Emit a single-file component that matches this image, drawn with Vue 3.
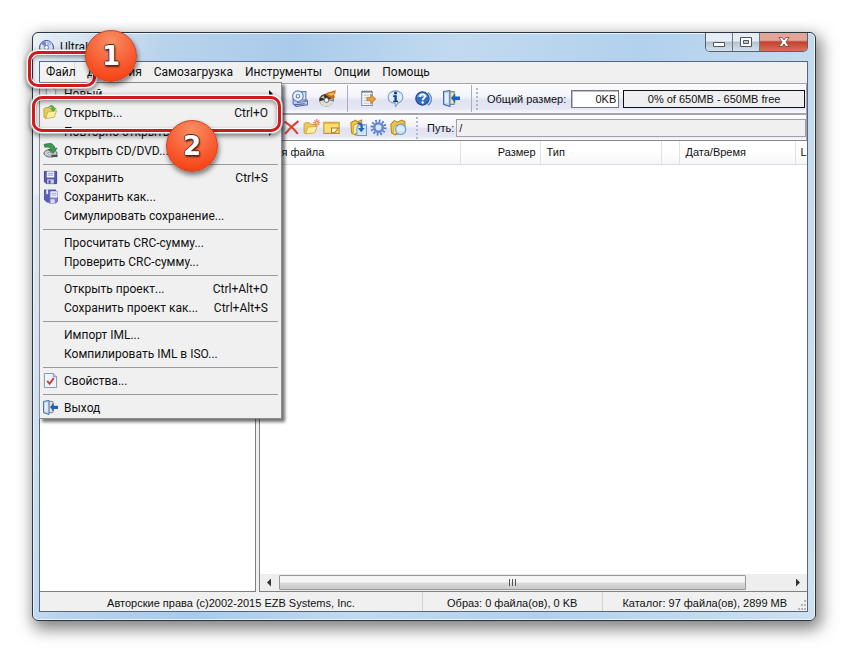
<script setup>
const menus = ['Действия', 'Самозагрузка', 'Инструменты', 'Опции', 'Помощь']
const fileMenu = [
  { t: 'Новый', icon: 'new', sub: true },
  { t: 'Открыть...', k: 'Ctrl+O', icon: 'open' },
  { t: 'Повторно открыть', sub: true },
  { t: 'Открыть CD/DVD...', icon: 'cd' },
  { sep: true },
  { t: 'Сохранить', k: 'Ctrl+S', icon: 'save' },
  { t: 'Сохранить как...', icon: 'saveas' },
  { t: 'Симулировать сохранение...' },
  { sep: true },
  { t: 'Просчитать CRC-сумму...' },
  { t: 'Проверить CRC-сумму...' },
  { sep: true },
  { t: 'Открыть проект...', k: 'Ctrl+Alt+O' },
  { t: 'Сохранить проект как...', k: 'Ctrl+Alt+S' },
  { sep: true },
  { t: 'Импорт IML...' },
  { t: 'Компилировать IML в ISO...' },
  { sep: true },
  { t: 'Свойства...', icon: 'props' },
  { sep: true },
  { t: 'Выход', icon: 'exit' }
]
</script>

<template>
  <svg class="defs" aria-hidden="true">
    <symbol id="i-disc" viewBox="0 0 16 16">
      <circle cx="8" cy="8" r="7.4" fill="#dfe4f4" stroke="#29366e" />
      <path d="M8 8 2 4A7 7 0 0 1 7 1ZM8 8 14 12A7 7 0 0 1 9 15Z" fill="#6c8bd8" />
      <path d="M8 8 9 1A7 7 0 0 1 14 4Z" fill="#a9bdea" />
      <circle cx="8" cy="8" r="2.2" fill="#fff" stroke="#5d6a9a" stroke-width=".8" />
    </symbol>
    <symbol id="i-new" viewBox="0 0 16 16">
      <path d="M3.500 1.500h7l3 3v10h-10z" fill="#f4f7fd" stroke="#8d9bb5" />
    </symbol>
    <symbol id="i-open" viewBox="0 0 16 16">
      <path d="M1 4l1-1 4-.5 1.500 1.500 4.500-.5v3L3 14.500 1 13z" fill="#e9c95a" stroke="#b39534" stroke-width=".8" />
      <path d="M3 14.500 5 7.500l9.500-1.500-2.500 7z" fill="#fbf0a0" stroke="#c0a545" stroke-width=".8" />
      <path d="M6 2.500C8-.5 11.500 0 12 3.500h2L11 7 8.500 4H10C9.500 2.200 8 2 6 2.500z" fill="#5ab43c" stroke="#36852a" stroke-width=".5" />
    </symbol>
    <symbol id="i-cd" viewBox="0 0 16 16">
      <ellipse cx="8" cy="11" rx="7" ry="4" fill="#c9ced4" stroke="#596069" />
      <path d="M9 12.500h6.500v2.500H9z" fill="#45515b" />
      <ellipse cx="7" cy="11" rx="2" ry="1" fill="#fff" stroke="#666" stroke-width=".6" />
      <path d="M1 1.500l5-1C9.500 0 12 2 12.500 5.500H15L11 11 5.500 7H8.500C8 4.800 6 4 2 4.500z" fill="#3c9a4f" stroke="#1e6038" stroke-width=".7" />
    </symbol>
    <symbol id="i-save" viewBox="0 0 16 16">
      <path d="M1.500 1.500h13v13h-11l-2-2z" fill="#5759ad" stroke="#3e4192" />
      <path d="M4 1.500h8V8H4z" fill="#f5f7ff" />
      <path d="M5 3.500h6M5 5.500h6" stroke="#8c94c5" />
      <path d="M4.500 10h7v4.500h-7z" fill="#cfd2e8" /><path d="M6 11h2v3.500H6z" fill="#4547a0" />
    </symbol>
    <symbol id="i-saveas" viewBox="0 0 16 16">
      <path d="M1 .5h13v11H12v3H4l-3-3z" fill="#5b5db2" />
      <path d="M3.500.5h2v5h-2z" fill="#e9ebf8" />
      <path d="M6.500 2.500h9V13l-2 2h-7z" fill="#7f82c8" stroke="#5457a6" stroke-width=".8" />
      <path d="M8 2.500h7.500V9H8z" fill="#f7f8ff" /><path d="M9 4.500h5.500M9 6.500h5.500" stroke="#949bca" />
      <path d="M8 11h4.500v4H8z" fill="#d8dbee" />
    </symbol>
    <symbol id="i-props" viewBox="0 0 16 16">
      <path d="M1.500.5h9.500l3.500 3.500v11.500h-13z" fill="#eef3fc" stroke="#7c91b9" />
      <path d="M11 .5V4h3.500" fill="#c8d6ee" stroke="#7c91b9" />
      <path d="M4.500 8.500l2.500 3 4.500-6" fill="none" stroke="#d33a32" stroke-width="2" />
    </symbol>
    <symbol id="i-exit" viewBox="0 0 16 16">
      <path d="M4.500 1.500h6v12h-6z" fill="#f2e4a6" stroke="#6f87ae" />
      <path d="M.5 1.500 6.500.5v15l-6-2z" fill="#b9d2f2" stroke="#4569a5" />
      <path d="M2 3l3-.5v10L2 12z" fill="#e3effc" />
      <path d="M7.500 7.500 11.500 3v3H16v3.500h-4.500v3z" fill="#1f5fc4" />
    </symbol>
    <symbol id="i-drive" viewBox="0 0 16 16">
      <path d="M2 8.500 12 7l3.500 3v4L5 15.500 2 13z" fill="#c3cde5" stroke="#5b6d99" />
      <path d="M5.500 12 15 10.500" stroke="#6f80ac" />
      <path d="M9 1.500h5v8h-3" fill="#dbe4f6" stroke="#6377a8" />
      <circle cx="6.500" cy="5.800" r="5" fill="#e8eefb" stroke="#5f78b8" />
      <circle cx="6.500" cy="5.800" r="1.600" fill="#fff" stroke="#6a80b5" />
      <path d="M3 14l10-1" stroke="#3e64b8" />
    </symbol>
    <symbol id="i-burn" viewBox="0 0 16 16">
      <ellipse cx="7" cy="9.500" rx="6.800" ry="6" fill="#34322f" />
      <path d="M.8 10.500 5 9.500h4l4.500 1C13 14 10 15.500 7 15.500S1.500 14 .8 10.500z" fill="#dedcd6" />
      <path d="M1.500 7l4 1.500L4.500 5zM13 7.500 9 9l4 1z" fill="#bcbab2" />
      <circle cx="7" cy="9.500" r="2.200" fill="#fff" stroke="#444" stroke-width=".7" />
      <path d="M6 4.500C8 1 12 2.500 15.500 0c.5 3-.5 4-1.500 4.500l1 2.500C12 9 9 7 6 4.500z" fill="#c96a17" />
      <path d="M8 4c2-1.500 4-.5 6.500-2-.5 3-3 4.500-6.500 2z" fill="#ffc04a" />
    </symbol>
    <symbol id="i-log" viewBox="0 0 16 16">
      <path d="M2.500 1.500h10v13h-10z" fill="#f5f5f7" stroke="#8792a8" />
      <path d="M3 1.500h9" stroke="#5f6b85" stroke-width="2" stroke-dasharray="1 1" />
      <path d="M4.500 5h5M4.500 7.500h3M4.500 10h3M4.500 12.500h5" stroke="#c0c6d4" />
      <path d="M7.500 7H11V4l4.800 4.500L11 13v-3H7.500z" fill="#e2a43f" stroke="#a56b1f" stroke-width=".7" />
    </symbol>
    <symbol id="i-info" viewBox="0 0 16 16">
      <path d="M8 .8c4 0 7 2.400 7 5.700s-2.700 5.300-4.500 5.700L8 15.500l-.5-3C3.500 12.300 1 9.800 1 6.500 1 3.200 4 .8 8 .8z" fill="#dcecfa" stroke="#809bbd" />
      <circle cx="8" cy="2.800" r="1.500" fill="#16407f" />
      <path d="M5.800 5h3.400v5h1.300v1.500H5.800V10H7V6.500H5.800z" fill="#16407f" />
    </symbol>
    <symbol id="i-help" viewBox="0 0 16 16">
      <path d="M12 2.500a7 7 0 0 1 0 12" fill="none" stroke="#7191c4" stroke-width="1.500" />
      <circle cx="7" cy="8" r="6.300" fill="#346bc3" stroke="#214a93" />
      <path d="M2 6.500a5.200 5.200 0 0 1 10 0z" fill="#76a5e6" />
      <path d="M4.700 6.500c0-3.200 4.800-3 4.800-.4 0 1.700-2.300 1.700-2.300 3.500" fill="none" stroke="#fff" stroke-width="1.700" />
      <circle cx="7.200" cy="11.800" r="1.100" fill="#fff" />
    </symbol>
    <symbol id="i-del" viewBox="0 0 16 16">
      <path d="M1.500 2.500Q8 6.500 14 14M14.500 2Q7.500 7 2 14" fill="none" stroke="#d7432d" stroke-width="2" />
    </symbol>
    <symbol id="i-newdir" viewBox="0 0 16 16">
      <path d="M1 4.500l1-1h4l1 1.500h5v3L3 14 1 13z" fill="#efc95b" stroke="#c99a2b" stroke-width=".8" />
      <path d="M2.500 14 4.500 7.500l9-.5-2.500 6z" fill="#fdeea0" stroke="#d2a53b" stroke-width=".8" />
      <path d="M13 0v7M9.500 3.500h7M10.700 1.200l4.600 4.600M15.300 1.200l-4.600 4.600" stroke="#ec7650" />
      <circle cx="13" cy="3.500" r="1" fill="#ffe28a" />
    </symbol>
    <symbol id="i-rename" viewBox="0 0 16 16">
      <path d="M.8 3h14.400v10.500H.8z" fill="#fbdf74" stroke="#c39429" />
      <path d="M1 4h14" stroke="#e7b540" stroke-width="1.500" />
      <path d="M8 13V8.500h6.500L11 13z" fill="#fff4c2" stroke="#a97d20" />
    </symbol>
    <symbol id="i-extract" viewBox="0 0 16 16">
      <path d="M.8 3.500 5 1l2 1.500 4-1.500v4L5 15 1.500 13z" fill="#efc34b" stroke="#b98a25" />
      <path d="M3 14.500 3.500 6 10 3l1 1v8z" fill="#fdeb98" stroke="#c69a35" stroke-width=".7" />
      <path d="M8.500 5.500h7v10h-9V8z" fill="#d3e5fa" stroke="#7098cd" />
      <path d="M7 3.500c4-1 5.500 1 5 5h2l-3.500 4-3-4H10C10 6 9.500 5 7 5z" fill="#2763bd" />
    </symbol>
    <symbol id="i-gear" viewBox="0 0 16 16">
      <circle cx="8" cy="8" r="6.300" fill="none" stroke="#5577c6" stroke-width="2.400" stroke-dasharray="1.600 1.700" />
      <circle cx="8" cy="8" r="4" fill="#dce7fb" stroke="#6488d6" stroke-width="2.400" />
    </symbol>
    <symbol id="i-view" viewBox="0 0 16 16">
      <path d="M.8 5 4 1.500 7 3l4-2 3 1.500v9L5 15 1.500 13z" fill="#efc34b" stroke="#b98a25" />
      <path d="M3 14 4 6.500 13 4l-1 9z" fill="#fdeb98" stroke="#c69a35" stroke-width=".7" />
      <circle cx="10" cy="9.800" r="4.800" fill="#cbe2f7" stroke="#6b99cf" />
      <path d="M7 8.500h6M7 10.500h6" stroke="#f3faff" />
    </symbol>
  </svg>

  <main class="page">
    <div class="window">
      <header class="title">
        <svg class="ic"><use href="#i-disc" /></svg>
        <span class="name">UltraISO</span>
        <div class="winbtns">
          <button aria-label="Свернуть"><svg viewBox="0 0 12 12"><path d="M.5 6.500h11v4H.5z" fill="#fff" stroke="#4c5562" /></svg></button>
          <button aria-label="Развернуть"><svg viewBox="0 0 12 12"><path d="M.5 1.500h11v9H.5z" fill="#fff" stroke="#4c5562" /><path d="M3.500 4.500h5v3h-5z" fill="#b9c8d8" stroke="#4c5562" /></svg></button>
          <button class="close" aria-label="Закрыть"><svg viewBox="0 0 12 12"><path d="M1 1.500h3.200L6 4l1.800-2.500H11L8 6l3 4.500H7.800L6 8l-1.800 2.500H1L4 6z" fill="#fff" stroke="#7a3a38" stroke-width=".8" /></svg></button>
        </div>
      </header>

      <div class="client">
        <nav class="menubar">
          <div class="filewrap">
            <button class="file">Файл</button>
            <div class="dropdown">
              <template v-for="(m, i) in fileMenu" :key="i">
                <hr v-if="m.sep">
                <button v-else class="item">
                  <svg v-if="m.icon" class="ic"><use :href="'#i-' + m.icon" /></svg>
                  <span v-else class="ic"></span>
                  <span class="t">{{ m.t }}</span>
                  <span v-if="m.k">{{ m.k }}</span>
                  <span v-if="m.sub" class="arrow"></span>
                </button>
              </template>
            </div>
          </div>
          <button v-for="m in menus" :key="m">{{ m }}</button>
        </nav>

        <div class="bar">
          <div class="group first">
            <button aria-label="Виртуальный привод"><svg class="big"><use href="#i-drive" /></svg></button>
            <button aria-label="Записать"><svg class="big"><use href="#i-burn" /></svg></button>
          </div>
          <div class="group">
            <button aria-label="Журнал"><svg class="big"><use href="#i-log" /></svg></button>
            <button aria-label="Сведения"><svg class="big"><use href="#i-info" /></svg></button>
            <button aria-label="Справка"><svg class="big"><use href="#i-help" /></svg></button>
            <button aria-label="Выход"><svg class="big"><use href="#i-exit" /></svg></button>
          </div>
          <span class="grip"></span>
          <label for="size">Общий размер:</label>
          <input id="size" class="size" value="0KB" readonly>
          <div class="gauge">0% of 650MB - 650MB free</div>
        </div>

        <div class="bar second">
          <div class="group first">
            <button aria-label="Удалить"><svg class="big"><use href="#i-del" /></svg></button>
            <button aria-label="Новая папка"><svg class="big"><use href="#i-newdir" /></svg></button>
            <button aria-label="Переименовать"><svg class="big"><use href="#i-rename" /></svg></button>
          </div>
          <div class="group">
            <button aria-label="Извлечь"><svg class="big"><use href="#i-extract" /></svg></button>
            <button aria-label="Настройки"><svg class="big"><use href="#i-gear" /></svg></button>
            <button aria-label="Просмотр"><svg class="big"><use href="#i-view" /></svg></button>
          </div>
          <span class="grip"></span>
          <label for="path">Путь:</label>
          <input id="path" class="path" value="/" readonly>
        </div>

        <div class="panes">
          <section class="tree"></section>
          <section class="list">
            <table>
              <colgroup><col class="c1"><col class="c2"><col class="c3"><col class="c4"><col class="c5"><col></colgroup>
              <thead><tr><th>Имя файла</th><th class="r">Размер</th><th>Тип</th><th></th><th>Дата/Время</th><th>L</th></tr></thead>
            </table>
            <div class="scroll">
              <span class="la"></span>
              <div class="track"><div class="thumb"><i></i><i></i><i></i></div></div>
              <span class="ra"></span>
            </div>
          </section>
        </div>

        <footer class="status">
          <span>Авторские права (c)2002-2015 EZB Systems, Inc.</span>
          <span>Образ: 0 файла(ов), 0 KB</span>
          <span>Каталог: 97 файла(ов), 2899 MB</span>
          <svg class="sizer" viewBox="0 0 10 10"><path d="M8 1h2M5 5h2M8 5h2M2 9h2M5 9h2M8 9h2" stroke="#b5b5b5" stroke-width="2" /></svg>
        </footer>
      </div>

      <div class="mark m1"></div>
      <div class="mark m2"></div>
      <div class="badge b1">1</div>
      <div class="badge b2">2</div>
    </div>
  </main>
</template>

<style>
body { background: #fff; }
</style>

<style scoped>
* { box-sizing: border-box; }
.defs { position: absolute; width: 0; height: 0; }
button { border: 0; background: none; padding: 0; margin: 0; color: #111; font: inherit; text-align: left; white-space: nowrap; }
.page { min-height: 100vh; padding: 32px 32px 33px; display: flex; font: 11px/14px "Liberation Sans", Arial, sans-serif; color: #111; }
.window {
  position: relative; flex: 1; min-width: 0; display: flex; flex-direction: column;
  padding: 0 7px 8px 6px; border: 1px solid #2b3642; border-radius: 6px;
  background:
    linear-gradient(#eaf0f5 0 160px, transparent 164px) left / 6px 100% no-repeat,
    linear-gradient(100deg, #e8eff6 0, #b9d3ec 130px, #a9cbea 260px, #c2daf0 420px, #b2d1ed 600px, #cfe0f0 100%);
  box-shadow: inset 0 0 0 1px #e9f3fb, 3px 6px 16px 2px rgba(0, 0, 0, .5);
}
.ic { width: 15px; height: 15px; flex: none; }
.title { height: 28px; display: flex; align-items: center; gap: 6px; font: 12px/16px Roboto, "Noto Sans", sans-serif; }
.name { flex: 1; }
.winbtns { display: flex; align-self: flex-start; border: 1px solid #56616e; border-top: 0; border-radius: 0 0 5px 5px; overflow: hidden; }
.winbtns button { width: 27px; height: 18px; display: grid; place-items: center; background: linear-gradient(#e7edf4 45%, #b4c2d1 50%, #d5e1ec); border-right: 1px solid #6d7884; }
.winbtns svg { width: 12px; height: 12px; }
.winbtns .close { width: 47px; border: 0; background: linear-gradient(#e3a598 40%, #c4412b 50%, #d9705a); }
.client { flex: 1; min-height: 0; display: flex; flex-direction: column; border: 1px solid #53687e; background: #f0f0f0; }
.menubar { display: flex; align-items: center; gap: 12px; height: 21px; padding-bottom: 2px; font: 12px/16px Roboto, "Noto Sans", sans-serif; }
.filewrap { position: relative; height: 19px; }
.file { height: 19px; padding: 0 6px; width: 35px; border-right: 1px solid #ddd; background: #f3f3f3; }
.dropdown {
  position: absolute; z-index: 5; left: -1px; top: 20px; width: 243px; padding: 1px 3px;
  background: #f0f0f0; border: 1px solid #8b8b8b; box-shadow: 3px 3px 3px rgba(0, 0, 0, .55);
}
.item { display: flex; align-items: center; width: 100%; height: 19px; padding-right: 10px; font-size: 12px; }
.item .t { flex: 1; padding-left: 6px; }
.arrow { border: 4px solid transparent; border-left-color: #111; border-right: 0; margin-right: -5px; }
hr { margin: 4px 0 3px; border: 0; height: 1px; background: #9a9a9a; }
.bar { display: flex; align-items: center; height: 31px; padding: 0 1px 0 0; border: 1px solid #a5a5ab; background: linear-gradient(#fdfdff, #f2f3fa 45%, #dfe2f2 55%, #e5e7f4 85%, #fbfbff); }
.second { height: 27px; padding: 0; border-bottom-color: #85858c; }
.big { display: block; width: 17px; height: 17px; }
.group { display: flex; gap: 11px; padding: 5px 11px; border-right: 1px solid #a9afc0; }
.group.first { padding-left: 250px; }
.second .group { gap: 3px; padding: 5px 5px; border: 0; }
.second .group.first { padding-left: 242px; }
.grip { width: 2px; height: 22px; margin: 0 9px 0 4px; background: repeating-linear-gradient(#b4b9ca 0 2px, transparent 2px 4px); }
input { min-width: 0; margin: 0; font: inherit; color: #111; border-radius: 0; }
.size { width: 48px; height: 18px; margin: 0 4px 0 5px; padding: 0 2px; text-align: right; background: #fff; border: 1px solid #77777d; outline: 0; box-shadow: inset 1px 1px #bbb; }
.gauge { flex: 1; height: 18px; border: 1px solid #111; background: #efeff1; text-align: center; line-height: 16px; white-space: nowrap; }
label { white-space: nowrap; }
.path { flex: 1; height: 18px; margin-left: 2px; padding: 0 2px; background: #f0f0f0; border: 1px solid #a0a0a6; }
.panes { flex: 1; min-height: 0; display: flex; gap: 3px; }
.tree { width: 216px; background: #fff; border: 1px solid #808080; border-left: 0; border-top: 0; }
.list { flex: 1; min-width: 0; display: flex; flex-direction: column; justify-content: space-between; background: #fff; border: 1px solid #808080; border-top: 0; border-right: 0; overflow: hidden; }
table { width: 100%; table-layout: fixed; border-collapse: collapse; }
th { height: 23px; padding: 0 6px; overflow: hidden; text-align: left; font-weight: 400; white-space: nowrap; background: linear-gradient(#fff 50%, #f5f6f8); border-right: 1px solid #e0e2e5; border-bottom: 1px solid #d8dadd; }
th:last-child { border-right: 0; padding: 0 0 0 5px; }
th.r { text-align: right; padding-right: 4px; }
.c1 { width: 200px; } .c2 { width: 80px; } .c3 { width: 121px; } .c4 { width: 18px; } .c5 { width: 116px; }
.scroll { display: flex; align-items: center; height: 17px; background: #eee; }
.la, .ra { width: 19px; height: 8px; background: #333; clip-path: polygon(7px 4px, 11px 0, 11px 8px); }
.ra { clip-path: polygon(12px 4px, 8px 0, 8px 8px); }
.track { flex: 1; padding-right: 42px; }
.thumb { height: 15px; display: flex; justify-content: center; align-items: center; gap: 2px; border: 1px solid #979797; border-radius: 1px; background: linear-gradient(#f5f5f5 45%, #d9d9d9 55%, #cbcbcb); }
.thumb i { width: 1px; height: 7px; background: #555; }
.status { position: relative; display: grid; grid-template-columns: 384fr 180fr 205fr; height: 19px; text-align: center; line-height: 22px; white-space: nowrap; }
.status span { height: 19px; border-right: 1px solid #d3d3d3; }
.status span:nth-child(3) { border: 0; }
.sizer { position: absolute; right: 1px; bottom: 1px; width: 10px; height: 10px; }
.mark { position: absolute; z-index: 6; border: 3px solid #cf1a1e; border-radius: 10px; box-shadow: 0 0 0 1px #fff, 0 0 0 2px rgba(255, 255, 255, .5), inset 0 0 0 1px #fff, 0 2px 5px 2px rgba(0, 0, 0, .5), inset 0 2px 4px 1px rgba(0, 0, 0, .4); }
.m1 { left: -5px; top: 18px; width: 68px; height: 36px; }
.m2 { left: -1px; top: 63px; width: 249px; height: 36px; }
.badge {
  position: absolute; z-index: 7; width: 52px; height: 52px; border-radius: 50%; color: #fff;
  font: bold 26px/50px "DejaVu Sans", Verdana, sans-serif; text-align: center;
  background: radial-gradient(circle at 50% 20%, #f98d63 0, #f8653b 45%, #f84a1c 75%, #dd3d17 100%);
  border: 1px solid #c6432a; box-shadow: 1px 3px 5px rgba(0, 0, 0, .5);
  text-shadow: 1px 0 #5d2417, -1px 0 #5d2417, 0 1px #5d2417, 0 -1px #5d2417, 1px 2px 2px #5d2417;
}
.b1 { left: 52px; top: -3px; }
.b2 { left: 133px; top: 87px; }
</style>
